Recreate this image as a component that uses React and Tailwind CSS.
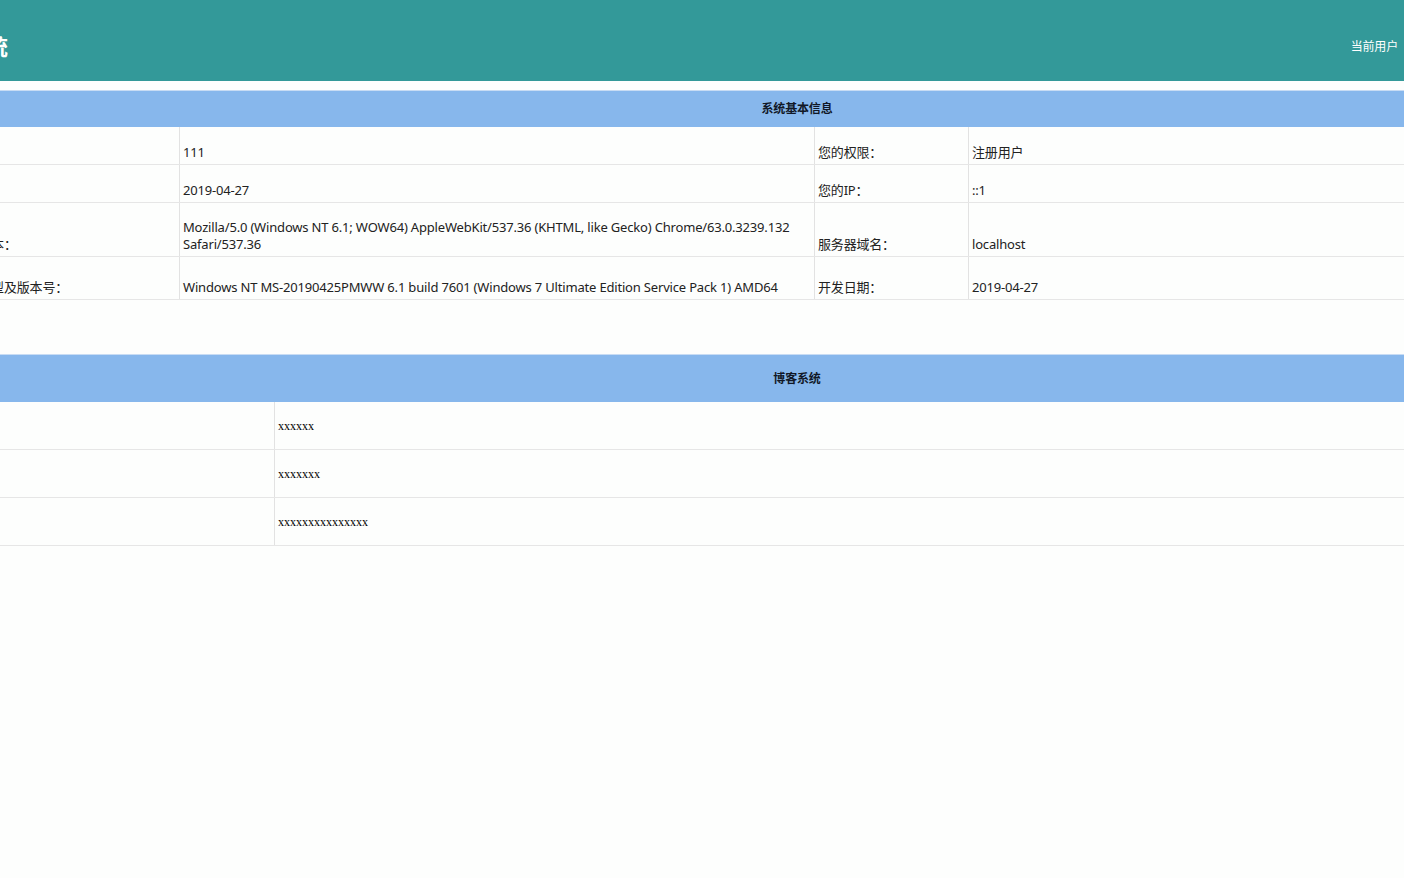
import React from 'react';

const font = { fontFamily: '"Noto Sans", "Noto Sans CJK SC", sans-serif' };

const sysRows = [
  { h: 'h-[38px]', a: '用户名：', b: '111', c: '您的权限：', d: '注册用户' },
  { h: 'h-[38px]', a: '登录时间：', b: '2019-04-27', c: '您的IP：', d: '::1' },
  {
    h: 'h-[54px]',
    a: '浏览器及版本：',
    b: 'Mozilla/5.0 (Windows NT 6.1; WOW64) AppleWebKit/537.36 (KHTML, like Gecko) Chrome/63.0.3239.132 Safari/537.36',
    c: '服务器域名：',
    d: 'localhost',
  },
  {
    h: 'h-[43px]',
    a: '操作系统类型及版本号：',
    b: 'Windows NT MS-20190425PMWW 6.1 build 7601 (Windows 7 Ultimate Edition Service Pack 1) AMD64',
    c: '开发日期：',
    d: '2019-04-27',
  },
];

const blogRows = [
  { a: '作者：', b: 'xxxxxx' },
  { a: '邮箱：', b: 'xxxxxxx' },
  { a: '简介：', b: 'xxxxxxxxxxxxxxx' },
];

const Cell = ({ w, children, last }) => (
  <div
    className={`${w} shrink-0 flex items-end pl-[3px] pb-[3px] leading-[17px] ${
      last ? '' : 'border-r border-[#e2e2e2]'
    }`}
  >
    <span className="block">{children}</span>
  </div>
);

export default function App() {
  return (
    <div
      className="w-full h-screen overflow-hidden bg-[#fdfefd] text-[13px] text-[#222] tracking-[-0.18px]"
      style={font}
    >
      {/* top bar */}
      <div className="h-[81px] pt-[12px] bg-[#339999] flex items-center justify-between">
        <div className="ml-[-124px] text-[22px] font-bold text-white whitespace-nowrap tracking-normal">
          博客管理系统
        </div>
        <div className="pr-[6px] text-[12px] text-white">当前用户</div>
      </div>

      <div className="h-[9px]" />

      {/* wider than the viewport, like the scrolled page */}
      <div className="ml-[-76px] w-[1746px]">
        {/* system info */}
        <div className="h-[37px] bg-[#87b7ec] border-t border-[#c8dcf4] flex items-center justify-center text-[12px] font-bold text-[#111827]">
          系统基本信息
        </div>
        {sysRows.map((r, i) => (
          <div key={i} className={`${r.h} flex border-b border-[#e6e6e6]`}>
            <Cell w="w-[256px]">{r.a}</Cell>
            <Cell w="w-[635px]">{r.b}</Cell>
            <Cell w="w-[154px]">{r.c}</Cell>
            <Cell w="flex-1" last>{r.d}</Cell>
          </div>
        ))}

        <div className="h-[54px]" />

        {/* blog */}
        <div className="h-[48px] bg-[#87b7ec] border-t border-[#c8dcf4] flex items-center justify-center text-[12px] font-bold text-[#111827]">
          博客系统
        </div>
        {blogRows.map((r, i) => (
          <div key={i} className="h-[48px] flex border-b border-[#e6e6e6]">
            <div className="w-[351px] shrink-0 flex items-center pl-[3px] border-r border-[#e2e2e2]">
              {r.a}
            </div>
            <div
              className="flex-1 flex items-center pl-[3px] text-[12px] text-black tracking-normal"
              style={{ fontFamily: '"Liberation Serif", serif' }}
            >
              {r.b}
            </div>
          </div>
        ))}
      </div>
    </div>
  );
}
